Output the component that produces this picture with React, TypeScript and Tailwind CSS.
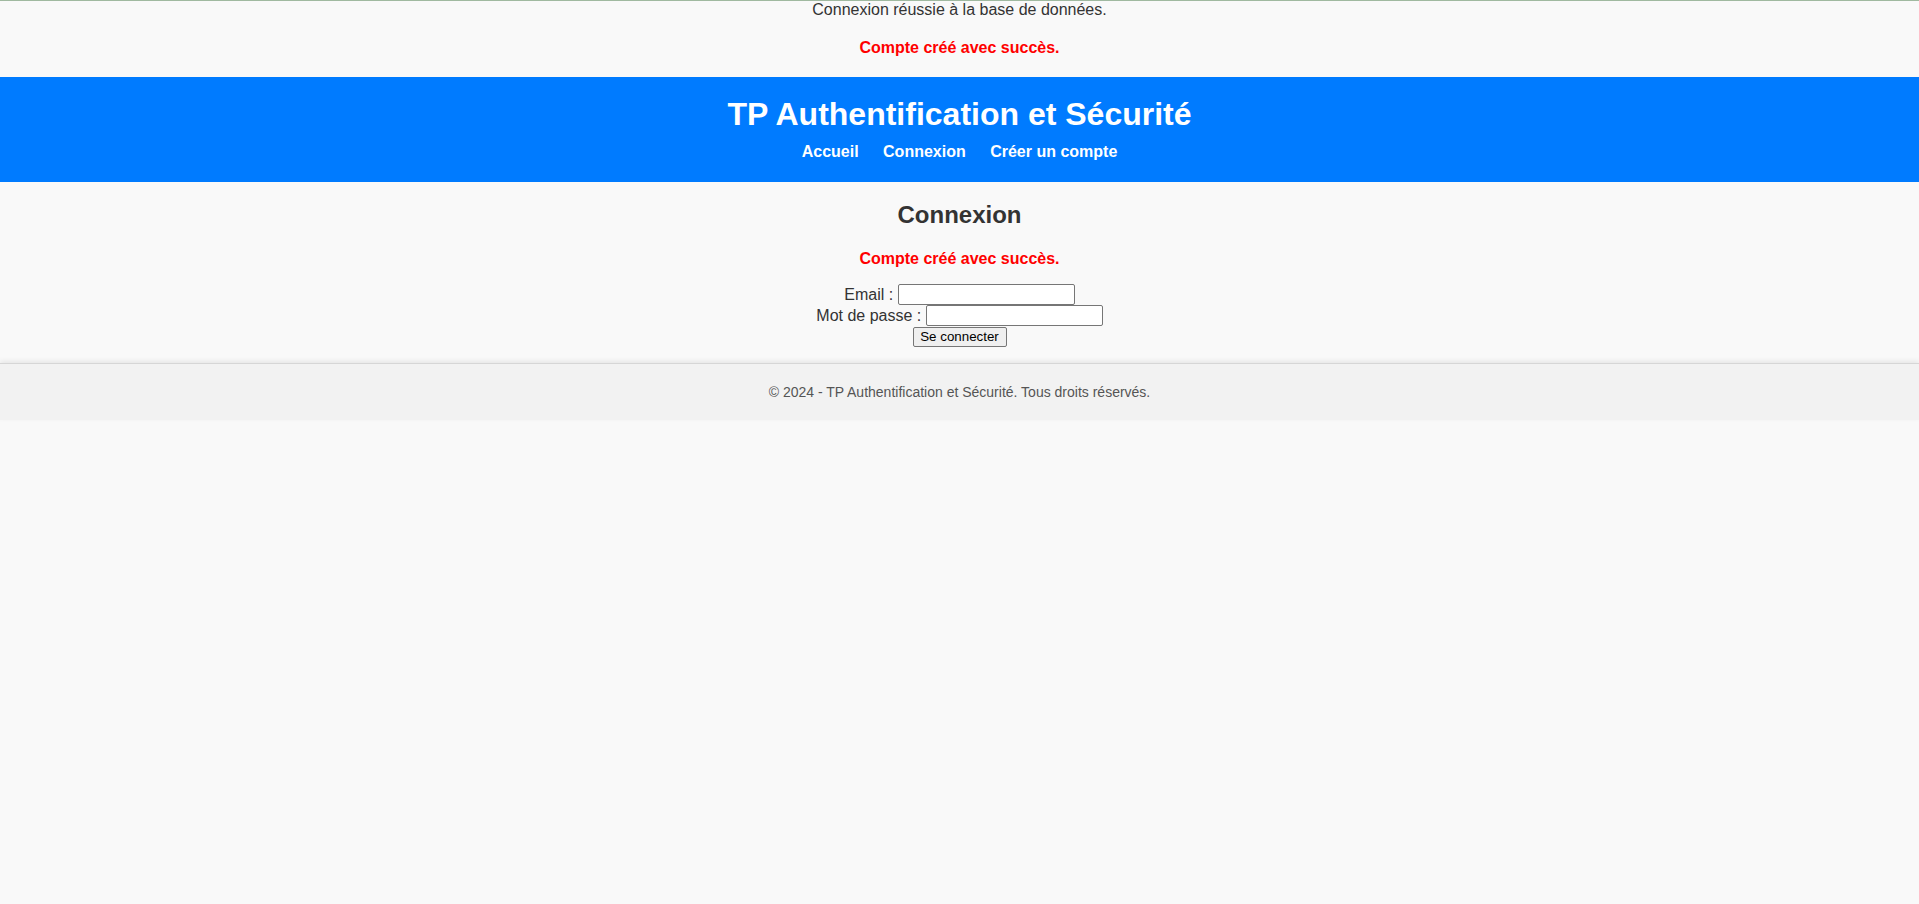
export default function App() {
  return (
    <div className="min-h-screen bg-[#f9f9f9] font-['Liberation_Sans',Arial,sans-serif] text-[16px] text-[#333]">
      {/* Messages PHP affichés avant le layout */}
      <div className="border-t border-[#a0b9a0] text-center">
        <div className="leading-[18px]">Connexion réussie à la base de données.</div>
        <p className="mt-[20px] mb-[20px] font-bold leading-[18px] text-[#ff0000]">Compte créé avec succès.</p>
      </div>

      {/* Header */}
      <header className="bg-[#007bff] pt-[19px] pb-[21px] text-center text-white">
        <h1 className="mb-[10px] text-[32px] font-bold leading-[37px]">TP Authentification et Sécurité</h1>
        <nav className="leading-[18px]">
          <a href="#" className="mx-[10px] font-bold text-white">Accueil</a>{' '}
          <a href="#" className="mx-[10px] font-bold text-white">Connexion</a>{' '}
          <a href="#" className="mx-[10px] font-bold text-white">Créer un compte</a>
        </nav>
      </header>

      {/* Content */}
      <main className="pt-[19px] pb-[16px] text-center">
        <h2 className="text-[24px] font-bold leading-[28px]">Connexion</h2>
        <p className="mt-[21px] mb-[16px] font-bold leading-[18px] text-[#ff0000]">Compte créé avec succès.</p>
        <form onSubmit={(e) => e.preventDefault()}>
          <div className="flex h-[21px] items-center justify-center">
            <label className="leading-[21px] whitespace-pre">Email : </label>
            <input
              type="email"
              className="h-[21px] w-[177px] rounded-[2px] border border-[#767676] bg-white px-[2px] text-[13.33px]"
            />
          </div>
          <div className="flex h-[21px] items-center justify-center">
            <label className="leading-[21px] whitespace-pre">Mot de passe : </label>
            <input
              type="password"
              className="h-[21px] w-[177px] rounded-[2px] border border-[#767676] bg-white px-[2px] text-[13.33px]"
            />
          </div>
          <div className="flex h-[21px] items-center justify-center">
            <button
              type="submit"
              className="h-[20px] w-[94px] rounded-[2px] border border-[#767676] bg-[#efefef] text-[13.33px] leading-[16px] text-black"
            >
              Se connecter
            </button>
          </div>
        </form>
      </main>

      {/* Footer */}
      <footer className="border-t border-[#d6d6d6] bg-[#f2f2f2] py-[20px] text-center text-[14px] leading-[16px] text-[#555] shadow-[0_-2px_5px_rgba(0,0,0,0.08)]">
        © 2024 - TP Authentification et Sécurité. Tous droits réservés.
      </footer>
    </div>
  );
}
